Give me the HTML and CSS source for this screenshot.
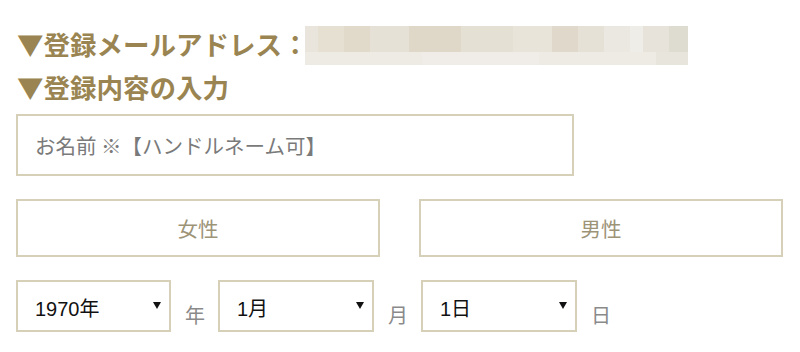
FILE: index.html
```html
<!DOCTYPE html>
<html lang="ja">
<head>
<meta charset="utf-8">
<title>登録内容の入力</title>
<link rel="stylesheet" href="styles.css">
</head>
<body>
<div class="page">
  <div class="heading heading-mail">
    <span>▼登録メールアドレス：</span>
    <span class="blur">
      <span class="blur-top"></span>
      <span class="blur-bottom"></span>
    </span>
  </div>
  <div class="heading">▼登録内容の入力</div>

  <div class="text-input">お名前 ※【ハンドルネーム可】</div>

  <div class="gender-row">
    <div class="gender-btn">女性</div>
    <div class="gender-btn">男性</div>
  </div>

  <div class="date-row">
    <div class="select"><span class="val">1970年</span><svg class="arrow" viewBox="0 0 8 7" width="8" height="7"><path d="M0 0H8L4 7Z" fill="#111"/></svg></div>
    <span class="unit">年</span>
    <div class="select"><span class="val">1月</span><svg class="arrow" viewBox="0 0 8 7" width="8" height="7"><path d="M0 0H8L4 7Z" fill="#111"/></svg></div>
    <span class="unit">月</span>
    <div class="select"><span class="val">1日</span><svg class="arrow" viewBox="0 0 8 7" width="8" height="7"><path d="M0 0H8L4 7Z" fill="#111"/></svg></div>
    <span class="unit">日</span>
  </div>
</div>
</body>
</html>
```

FILE: styles.css
```css
html, body {
  margin: 0;
  padding: 0;
  background: #ffffff;
}

body {
  font-family: "Noto Sans CJK JP", "Noto Sans", sans-serif;
}

.page {
  width: 767px;
  padding: 22px 0 0 16px;
}

.heading {
  font-size: 26.5px;
  font-weight: 700;
  line-height: 43px;
  height: 43px;
  color: #9a8552;
  padding-left: 1px;
  white-space: nowrap;
}

.heading-mail {
  display: flex;
  align-items: center;
}

.blur {
  display: flex;
  flex-direction: column;
  width: 383px;
  height: 39px;
  margin-left: -4px;
  margin-top: 3px;
}

.blur-top {
  height: 26px;
  background: linear-gradient(90deg,
    #e9e5dc 0, #e9e5dc 13px,
    #e6e0d3 13px, #e6e0d3 39px,
    #e1d9ca 39px, #e1d9ca 65px,
    #e6e1d6 65px, #e6e1d6 104px,
    #dfd8c8 104px, #dfd8c8 156px,
    #e5e0d4 156px, #e5e0d4 208px,
    #e8e4da 208px, #e8e4da 247px,
    #e0d9cb 247px, #e0d9cb 273px,
    #e6e1d6 273px, #e6e1d6 299px,
    #ebe8e1 299px, #ebe8e1 325px,
    #efede8 325px, #efede8 338px,
    #e7e3db 338px, #e7e3db 364px,
    #dedbd0 364px, #dedbd0 383px);
}

.blur-bottom {
  height: 13px;
  background: linear-gradient(90deg,
    #eeebe5 0, #eeebe5 117px,
    #f0ede8 117px, #f0ede8 234px,
    #eeebe5 234px, #eeebe5 351px,
    #e8e5dd 351px, #e8e5dd 383px);
}

.text-input {
  box-sizing: border-box;
  width: 558px;
  height: 62px;
  margin-top: 6px;
  border: 2px solid #d6d0b9;
  padding-left: 17px;
  display: flex;
  align-items: center;
  font-size: 20.5px;
  color: #7a7a7a;
  white-space: nowrap;
}

.gender-row {
  display: flex;
  gap: 39px;
  margin-top: 23px;
}

.gender-btn {
  box-sizing: border-box;
  flex: 1;
  height: 58px;
  border: 2px solid #d6d0b9;
  display: flex;
  align-items: center;
  justify-content: center;
  font-size: 20.5px;
  color: #9d9478;
}

.date-row {
  display: flex;
  align-items: center;
  margin-top: 23px;
}

.select {
  box-sizing: border-box;
  width: 155px;
  height: 52px;
  border: 2px solid #d6d0b9;
  display: flex;
  align-items: center;
  justify-content: space-between;
  padding: 0 8px 0 17px;
  font-family: "Liberation Sans", "Noto Sans CJK JP", sans-serif;
  font-size: 20px;
  color: #111111;
}

.select + .unit + .select {
  width: 156px;
}

.val {
  padding-top: 2px;
}

.arrow {
  display: block;
  margin-top: -1px;
}

.unit {
  font-size: 20px;
  color: #8a8a8a;
  padding-top: 16px;
  margin: 0 13px 0 14px;
}
```
